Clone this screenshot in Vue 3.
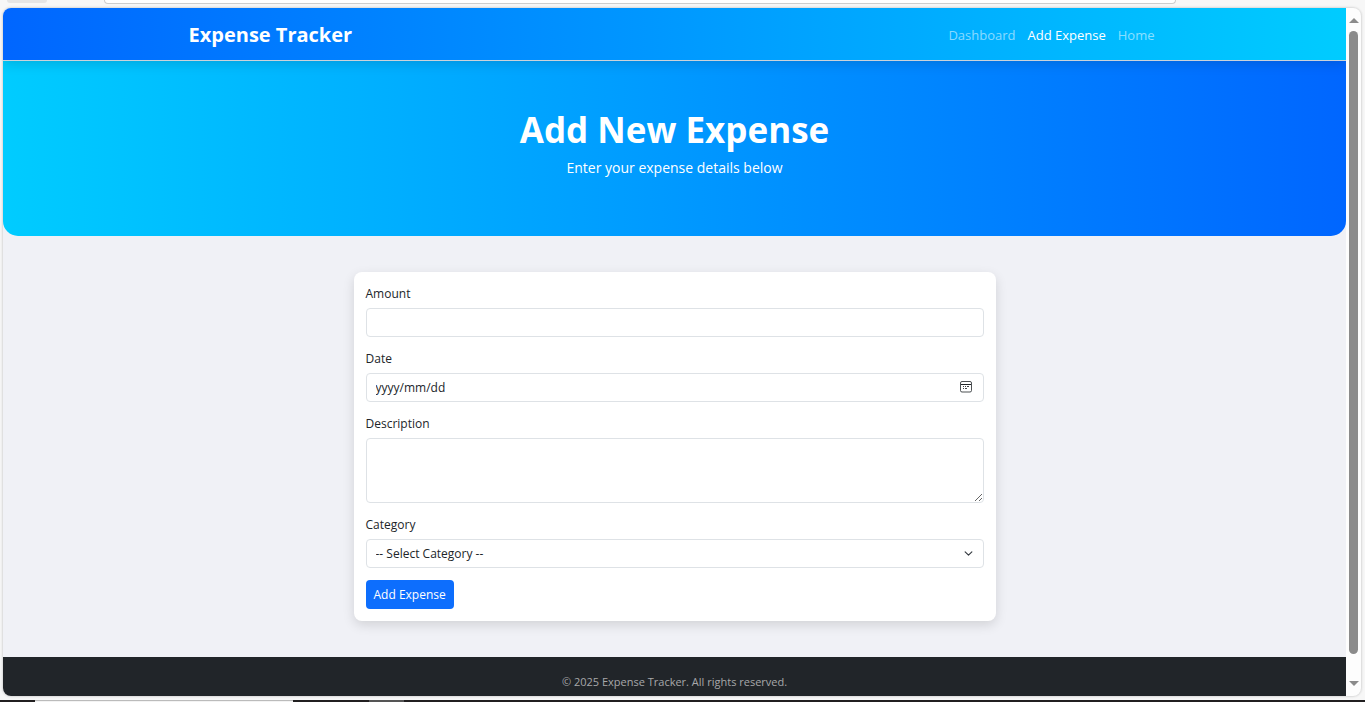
<script setup>
import { ref } from 'vue'

const links = [
  { label: 'Dashboard', active: false },
  { label: 'Add Expense', active: true },
  { label: 'Home', active: false },
]
const categories = ['Food', 'Transport', 'Bills', 'Other']
const amount = ref('')
const date = ref('')
const description = ref('')
const category = ref('')
</script>

<template>
  <div class="screen">
    <div class="toolbar">
      <span class="tool"></span>
      <span class="address"></span>
    </div>

    <div class="window">
      <div class="page">
        <nav class="navbar">
          <div class="container">
            <a class="brand" href="#">Expense Tracker</a>
            <div class="links">
              <a v-for="l in links" :key="l.label" href="#" :class="{ active: l.active }">{{ l.label }}</a>
            </div>
          </div>
        </nav>

        <header class="hero">
          <h1>Add New Expense</h1>
          <p>Enter your expense details below</p>
        </header>

        <main>
          <form class="card" @submit.prevent>
            <div class="field">
              <label for="amount">Amount</label>
              <input id="amount" v-model="amount" class="control" type="text" inputmode="decimal" />
            </div>
            <div class="field">
              <label for="date">Date</label>
              <div class="date">
                <input id="date" v-model="date" class="control" type="text" placeholder="yyyy/mm/dd" />
                <button class="picker" type="button" aria-label="Choose date">
                  <svg width="12" height="12" viewBox="0 0 12 12" fill="none" stroke="#212529">
                    <rect x="0.5" y="0.5" width="11" height="10.5" rx="1.5" stroke-opacity="0.8" />
                    <path d="M1 3.5h10" />
                    <path d="M3 5.5h1M5 5.5h1M7 5.5h2M3 7.5h1M5 7.5h2" stroke-opacity="0.85" />
                  </svg>
                </button>
              </div>
            </div>
            <div class="field">
              <label for="description">Description</label>
              <textarea id="description" v-model="description" class="control"></textarea>
            </div>
            <div class="field">
              <label for="category">Category</label>
              <div class="select">
                <select id="category" v-model="category" class="control">
                  <option value="">-- Select Category --</option>
                  <option v-for="c in categories" :key="c" :value="c">{{ c }}</option>
                </select>
                <svg class="chevron" width="9" height="9" viewBox="0 0 16 16" fill="none" stroke="#343a40" stroke-width="2" stroke-linecap="round" stroke-linejoin="round">
                  <path d="m2 5 6 6 6-6" />
                </svg>
              </div>
            </div>
            <button class="submit" type="submit">Add Expense</button>
          </form>
        </main>

        <footer>© 2025 Expense Tracker. All rights reserved.</footer>
      </div>

      <div class="scrollbar">
        <svg width="10" height="5" viewBox="0 0 10 5" fill="#8b8b8b"><path d="M5 0l5 5H0z" /></svg>
        <span class="thumb"></span>
        <svg width="10" height="5" viewBox="0 0 10 5" fill="#8b8b8b"><path d="M0 0h10L5 5z" /></svg>
      </div>
    </div>

    <div class="taskbar">
      <span class="task"></span>
      <span class="task-dim"></span>
    </div>
  </div>
</template>

<style>
body {
  margin: 0;
  overflow: hidden;
}
</style>

<style scoped>
* {
  box-sizing: border-box;
}
.screen {
  display: flex;
  flex-direction: column;
  height: 100vh;
  background: #f7f7f7;
  font-family: "Segoe UI", "Open Sans", "Noto Sans", sans-serif;
  font-size: 12px;
  line-height: 18px;
  color: #212529;
}
.toolbar {
  display: flex;
  align-items: flex-start;
  flex: 0 0 8px;
  gap: 57px;
  padding: 0 189px 0 7px;
}
.tool {
  width: 40px;
  height: 3px;
  border-radius: 0 0 3px 3px;
  background: #e5e5e5;
}
.address {
  flex: 1;
  height: 4px;
  border: 1px solid #cdcdcd;
  border-top: 0;
  border-radius: 0 0 8px 8px;
  background: #fff;
}
.window {
  display: flex;
  flex: 1;
  min-height: 0;
  margin: 0 4px 4px 3px;
  border-radius: 8px;
  overflow: hidden;
  background: #fdfdfd;
  box-shadow: 0 0 2px 1px #d8d8d8;
}
.page {
  display: flex;
  flex-direction: column;
  flex: 1;
  overflow: hidden;
  background: #f0f1f6;
}
.navbar {
  position: relative;
  height: 53px;
  flex: none;
  background: linear-gradient(90deg, #06f, #0cf);
  border-bottom: 1px solid #cbd3da;
  box-shadow: 0 2px 12px rgba(0, 0, 0, 0.15);
}
.container {
  display: flex;
  align-items: center;
  justify-content: space-between;
  max-width: 972px;
  height: 100%;
  margin: 0 auto;
  padding: 2px 6px 0 0;
}
a {
  text-decoration: none;
}
.brand {
  font-size: 20px;
  line-height: 32px;
  font-weight: 700;
  color: #fff;
}
.links {
  display: flex;
  gap: 12px;
  font-size: 13px;
  line-height: 20px;
}
.links a {
  color: rgba(255, 255, 255, 0.55);
}
.links a.active {
  color: #fff;
}
.hero {
  flex: none;
  padding: 46px 12px 57px;
  border-radius: 0 0 15px 15px;
  background: linear-gradient(90deg, #0cf, #06f);
  color: #fff;
  text-align: center;
}
.hero h1 {
  margin: 0 0 4px;
  font-size: 35px;
  line-height: 46px;
  font-weight: 700;
}
.hero p {
  margin: 0;
  font-size: 14px;
  line-height: 22px;
}
main {
  padding: 36px 12px;
}
.card {
  display: flex;
  flex-direction: column;
  align-items: flex-start;
  gap: 12px;
  max-width: 642px;
  margin: 0 auto;
  padding: 12px;
  border-radius: 8px;
  background: #fff;
  box-shadow: 0 4px 12px rgba(0, 0, 0, 0.13);
}
.field {
  display: flex;
  flex-direction: column;
  gap: 4px;
  width: 100%;
}
label {
  line-height: 20px;
}
.control {
  display: block;
  width: 100%;
  height: 29px;
  margin: 0;
  padding: 4px 9px;
  border: 1px solid #dee2e6;
  border-radius: 4px;
  background: #fff;
  color: #212529;
  font: inherit;
  appearance: none;
}
.control::placeholder {
  color: #212529;
  opacity: 1;
}
textarea.control {
  height: 65px;
  resize: vertical;
}
.date,
.select {
  position: relative;
}
.picker {
  position: absolute;
  top: 8px;
  right: 12px;
  display: block;
  width: 12px;
  height: 12px;
  padding: 0;
  border: 0;
  background: none;
}
.picker svg {
  display: block;
}
.chevron {
  position: absolute;
  top: 10px;
  right: 11px;
  pointer-events: none;
}
.submit {
  height: 29px;
  padding: 0 8px;
  border: 0;
  border-radius: 4px;
  background: #0d6efd;
  color: #fff;
  font: inherit;
}
footer {
  flex: 1;
  padding-top: 16px;
  background: #212529;
  color: #a7a8aa;
  font-size: 11px;
  text-align: center;
}
.scrollbar {
  display: flex;
  flex-direction: column;
  align-items: center;
  flex: 0 0 15px;
  gap: 8px;
  padding: 10px 0;
}
.scrollbar svg {
  flex: none;
}
.thumb {
  flex: 1;
  width: 9px;
  margin-bottom: 19px;
  border-radius: 5px;
  background: #8b8b8b;
}
.taskbar {
  display: flex;
  gap: 76px;
  flex: 0 0 2px;
  padding-left: 35px;
  background: #211f20;
}
.task {
  width: 258px;
  border-top: 1px solid #bbb;
  background: #f3f3f3;
}
.task-dim {
  width: 35px;
  background: #555;
}
</style>
